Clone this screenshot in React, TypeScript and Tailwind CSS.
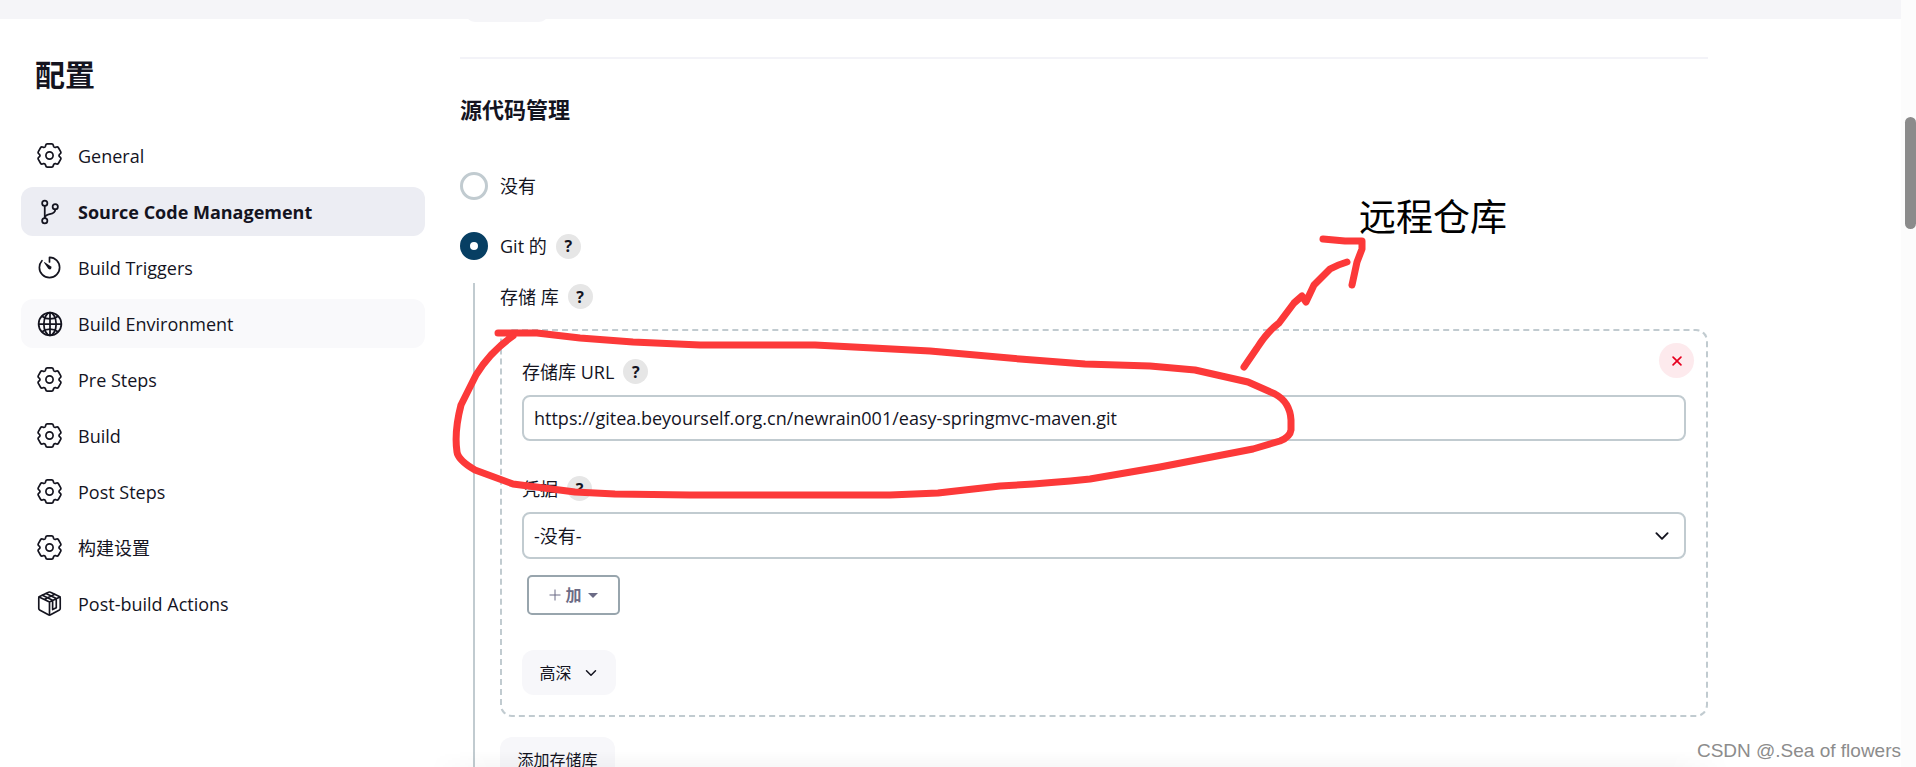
import { IoChevronDown, IoClose, IoGitBranchOutline, IoGlobeOutline, IoTimerOutline } from 'react-icons/io5'

type Point = [number, number]

// One tooth of the gear, centred on the origin and pointing up
const tooth: Point[] = [[-4, -9.3], [-3.8, -10.3], [-3.5, -11.6], [-2.2, -11.6], [2.2, -11.6], [3.5, -11.6], [3.8, -10.3], [4, -9.3], [4.5, -7.8]]

function gearPath() {
  const parts = Array.from({ length: 6 }).map((_, i) => {
    const a = (i * Math.PI) / 3
    const p = tooth.map(([x, y]) => `${(x * Math.cos(a) - y * Math.sin(a)).toFixed(2)} ${(x * Math.sin(a) + y * Math.cos(a)).toFixed(2)}`)
    return `${p[0]} L${p[1]} Q${p[2]} ${p[3]} L${p[4]} Q${p[5]} ${p[6]} L${p[7]} Q${p[8]} `
  })
  return `M${parts.join('')}-4 -9.3Z`
}

function GearIcon() {
  return (
    <svg viewBox="-12.5 -12.5 25 25" className="size-[25px]" fill="none" stroke="currentColor" strokeWidth="1.7" strokeLinejoin="round">
      <path d={gearPath()} />
      <circle r="3.6" />
    </svg>
  )
}

function PackageIcon() {
  return (
    <svg viewBox="0 0 24 24" className="size-[25px]" fill="none" stroke="currentColor" strokeWidth="1.6" strokeLinejoin="round" strokeLinecap="round">
      <path d="M11 1.2Q12 .7 13 1.2L21.5 5.2Q22.3 5.7 22.3 6.6V16.9Q22.3 17.8 21.5 18.2L13 22.7Q12 23.2 11 22.7L2.5 18.2Q1.7 17.8 1.7 16.9V6.6Q1.7 5.7 2.5 5.2Z" />
      <path d="M2 5.7 12 10.6 22 5.7M12 10.6V23M5.2 4 15 8.8V17.8L18.5 16V7.2L8.7 2.5M7 8.1 17 3.2" />
    </svg>
  )
}

const sections = [
  { label: 'General', icon: <GearIcon /> },
  { label: 'Source Code Management', icon: <IoGitBranchOutline size={28} />, state: 'active' },
  { label: 'Build Triggers', icon: <IoTimerOutline size={27} /> },
  { label: 'Build Environment', icon: <IoGlobeOutline size={28} />, state: 'hover' },
  { label: 'Pre Steps', icon: <GearIcon /> },
  { label: 'Build', icon: <GearIcon /> },
  { label: 'Post Steps', icon: <GearIcon /> },
  { label: '构建设置', icon: <GearIcon /> },
  { label: 'Post-build Actions', icon: <PackageIcon /> },
]

function itemStyle(state?: string) {
  if (state === 'active') return 'bg-[#ecedf3] font-bold'
  if (state === 'hover') return 'bg-[#f9f9fb]'
  return ''
}

function Help({ topic }: { topic: string }) {
  return (
    <button aria-label={`${topic} ?`} className="flex size-[25px] shrink-0 items-center justify-center rounded-full bg-[#e6e6e6] text-base font-bold">
      ?
    </button>
  )
}

function FieldLabel({ id, text }: { id: string; text: string }) {
  return (
    <div className="flex h-[25px] items-center gap-[9px]">
      <label htmlFor={id}>{text}</label>
      <Help topic={text} />
    </div>
  )
}

/** Hand-drawn markup lying over the form. */
function Annotation() {
  return (
    <div className="pointer-events-none absolute top-0 left-0">
      <svg width="1600" height="520" viewBox="0 0 1600 520" fill="none" stroke="#fc3939" strokeWidth="7" strokeLinecap="round" strokeLinejoin="round">
        <path d="M498 333H537L580 338 633 342 700 345H815L873 348 930 351 1020 359 1085 364 1150 366 1195 370 1248 382 1275 394Q1290 402 1291 420V430Q1290 437 1280 441L1253 449 1160 467 1090 479Q1040 484 1000 486L938 493 890 495H690L615 494 575 492 513 484 475 470Q458 460 457 452 454 432 461 405L476 375Q490 352 513 336" />
        <path d="M1244 367 1257 348Q1267 332 1279 323L1294 303 1302 296 1306 302 1314 285 1330 269Q1337 265 1347 262M1323 239 1345 241H1362V249L1357 262 1352 285" />
      </svg>
      <p className="absolute top-[192px] left-[1359px] text-[37px] leading-[50px] whitespace-nowrap text-black">远程仓库</p>
    </div>
  )
}

export default function App() {
  return (
    <div className="relative flex h-screen overflow-hidden bg-white font-['Open_Sans','Noto_Sans_CJK_SC',sans-serif] text-lg leading-6 text-[#14141f]">
      <div className="flex min-w-0 flex-1 flex-col">
        <header className="h-[19px] shrink-0 bg-[#f5f5f8] pl-[464px]">
          <div className="h-[22px] w-[86px] rounded-b-xl bg-[#f5f5f8]" />
        </header>

        <div className="flex min-h-0 flex-1">
          <aside className="w-[460px] shrink-0 pt-[34px] pr-[35px] pl-[21px]">
            <h1 className="mb-[34px] pl-3.5 text-[30px] leading-11 font-bold">配置</h1>
            <nav className="flex flex-col gap-[7px]">
              {sections.map(({ label, icon, state }) => (
                <a key={label} href="#" className={`flex h-[49px] items-center gap-4 rounded-xl pl-4 ${itemStyle(state)}`}>
                  <span className="flex size-[25px] items-center justify-center *:shrink-0">{icon}</span>
                  {label}
                </a>
              ))}
            </nav>
          </aside>

          <main className="max-w-[1248px] min-w-0 flex-1 pt-[38px]">
            <hr className="border-t-2 border-[#f3f3f8]" />
            <h2 className="mt-[34px] text-[22px] leading-8 font-bold">源代码管理</h2>

            <div className="mt-[47px] flex h-7 items-center gap-3">
              <input id="scm-none" name="scm" type="radio" className="size-7 appearance-none rounded-full border-[3px] border-[#c1cbd0] bg-white" />
              <label htmlFor="scm-none">没有</label>
            </div>
            <div className="mt-8 flex h-7 items-center gap-3">
              <input id="scm-git" name="scm" type="radio" defaultChecked className="size-7 appearance-none rounded-full border-[10px] border-[#073f63] bg-white" />
              <div className="flex items-center gap-[9px]">
                <label htmlFor="scm-git">Git 的</label>
                <Help topic="Git" />
              </div>
            </div>

            <div className="mt-[23px] ml-[13px] border-l-2 border-[#c1cbd0] pb-20 pl-[25px]">
              <div className="flex h-[27px] items-center gap-[9px]">
                <span>存储 库</span>
                <Help topic="存储库" />
              </div>

              <section className="relative mt-[19px] rounded-xl border-2 border-dashed border-[#c1cbd0] px-5 pt-[28px] pb-5">
                <button aria-label="删除" className="absolute top-3 right-3 flex size-[35px] items-center justify-center rounded-full bg-[#fdeaed] text-[#e6001f]">
                  <IoClose size={18} />
                </button>

                <FieldLabel id="repo-url" text="存储库 URL" />
                <input id="repo-url" type="text" defaultValue="https://gitea.beyourself.org.cn/newrain001/easy-springmvc-maven.git" className="mt-[11px] h-[46px] w-full rounded-lg border-2 border-[#c1cbd0] px-2.5" />

                <div className="mt-[35px]">
                  <FieldLabel id="credentials" text="凭据" />
                </div>
                <div className="relative mt-[11px]">
                  <select id="credentials" className="h-[47px] w-full appearance-none rounded-lg border-2 border-[#c1cbd0] bg-white px-2.5">
                    <option>-没有-</option>
                  </select>
                  <IoChevronDown size={20} className="pointer-events-none absolute top-3.5 right-3.5" />
                </div>

                <button className="mt-4 ml-[5px] flex h-10 w-[93px] items-center justify-center gap-1 rounded-[5px] border-2 border-[#98a5ad] text-base font-bold text-[#6b6b85]">
                  <svg viewBox="0 0 12 12" className="size-3" stroke="currentColor"><path d="M6 .5v11M.5 6h11" /></svg>
                  加
                  <svg viewBox="0 0 10 5" className="ml-0.5 h-[5px] w-2.5" fill="currentColor"><path d="M0 0h10L5 5z" /></svg>
                </button>

                <button className="mt-[35px] flex h-[45px] w-[94px] items-center justify-center gap-[11px] rounded-xl bg-[#f7f7fa] text-base">
                  高深
                  <IoChevronDown size={16} />
                </button>
              </section>

              <button className="mt-5 h-[45px] w-[115px] rounded-xl bg-[#f7f7fa] text-base">添加存储库</button>
            </div>
          </main>
        </div>
      </div>

      <div className="w-[15px] shrink-0 bg-[#fcfcfc] pt-[117px] pl-1">
        <div className="h-28 w-[11px] rounded-full bg-[#8b8b8b]" />
      </div>

      <div className="pointer-events-none absolute bottom-0 left-[430px] h-4 w-[1300px] bg-linear-to-t from-black/3 to-transparent [mask-image:linear-gradient(to_right,transparent,black_60px,black_1240px,transparent)]" />
      <Annotation />
      <p className="absolute right-[15px] bottom-1 font-['Liberation_Sans',sans-serif] text-[19px] leading-6 text-[#8c8c8c]">CSDN @.Sea of flowers</p>
    </div>
  )
}
